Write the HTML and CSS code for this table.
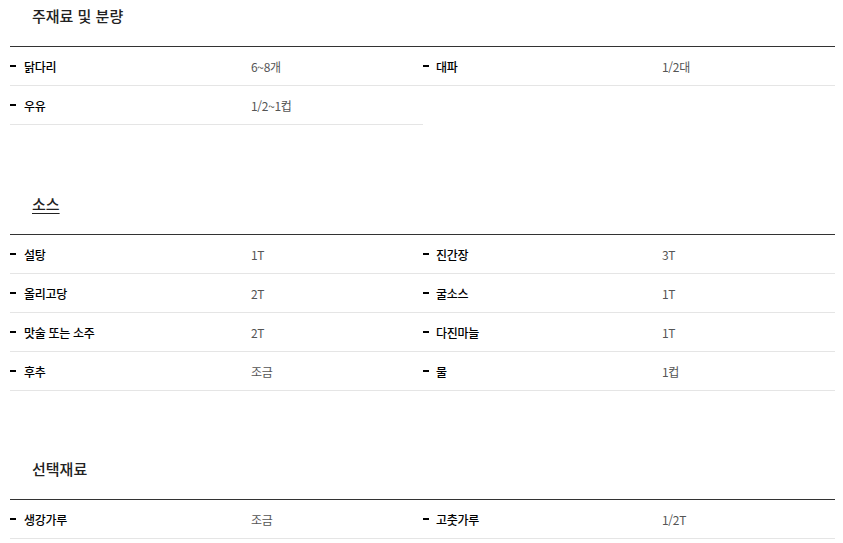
FILE: index.html
```html
<!DOCTYPE html>
<html lang="ko">
<head>
<meta charset="utf-8">
<link rel="stylesheet" href="styles.css">
</head>
<body>
<div class="wrap">
  <section class="group">
    <h3 class="group-title">주재료 및 분량</h3>
    <ul class="list">
      <li class="item"><span class="name">닭다리</span><span class="amount">6~8개</span></li>
      <li class="item"><span class="name">대파</span><span class="amount">1/2대</span></li>
      <li class="item"><span class="name">우유</span><span class="amount">1/2~1컵</span></li>
    </ul>
  </section>
  <section class="group group-sauce">
    <h3 class="group-title"><span class="underline">소스</span></h3>
    <ul class="list">
      <li class="item"><span class="name">설탕</span><span class="amount">1T</span></li>
      <li class="item"><span class="name">진간장</span><span class="amount">3T</span></li>
      <li class="item"><span class="name">올리고당</span><span class="amount">2T</span></li>
      <li class="item"><span class="name">굴소스</span><span class="amount">1T</span></li>
      <li class="item"><span class="name">맛술 또는 소주</span><span class="amount">2T</span></li>
      <li class="item"><span class="name">다진마늘</span><span class="amount">1T</span></li>
      <li class="item"><span class="name">후추</span><span class="amount">조금</span></li>
      <li class="item"><span class="name">물</span><span class="amount">1컵</span></li>
    </ul>
  </section>
  <section class="group group-option">
    <h3 class="group-title">선택재료</h3>
    <ul class="list">
      <li class="item"><span class="name">생강가루</span><span class="amount">조금</span></li>
      <li class="item"><span class="name">고춧가루</span><span class="amount">1/2T</span></li>
    </ul>
  </section>
</div>
</body>
</html>
```

FILE: styles.css
```css
html, body {
  margin: 0;
  padding: 0;
  background: #fff;
}
body {
  font-family: "Noto Sans CJK KR", "Noto Sans", sans-serif;
  color: #000;
}
.wrap {
  width: 825px;
  padding: 6px 8px 0 10px;
}
.group-sauce {
  margin-top: 69px;
}
.group-option {
  margin-top: 68px;
}
.group-title {
  margin: 0 0 20px;
  padding-left: 22px;
  font-size: 15px;
  line-height: 20px;
  font-weight: 500;
  color: #222;
}
.underline {
  text-decoration: underline;
  text-underline-offset: 3px;
}
.list {
  list-style: none;
  margin: 0;
  padding: 0;
  border-top: 1px solid #333;
  display: grid;
  grid-template-columns: 413px 412px;
}
.item {
  display: flex;
  align-items: center;
  height: 38px;
  border-bottom: 1px solid #e5e5e5;
  font-size: 12px;
}
.name {
  position: relative;
  width: 227px;
  padding-left: 14px;
  color: #000;
  font-weight: 500;
  letter-spacing: -0.3px;
}
.name::before {
  content: "";
  position: absolute;
  left: 0;
  top: 50%;
  width: 6px;
  height: 2px;
  margin-top: -1px;
  background: #000;
}
.item:nth-child(even) .name {
  width: 226px;
  padding-left: 13px;
}
.amount {
  color: #555;
  letter-spacing: -0.3px;
}
```
